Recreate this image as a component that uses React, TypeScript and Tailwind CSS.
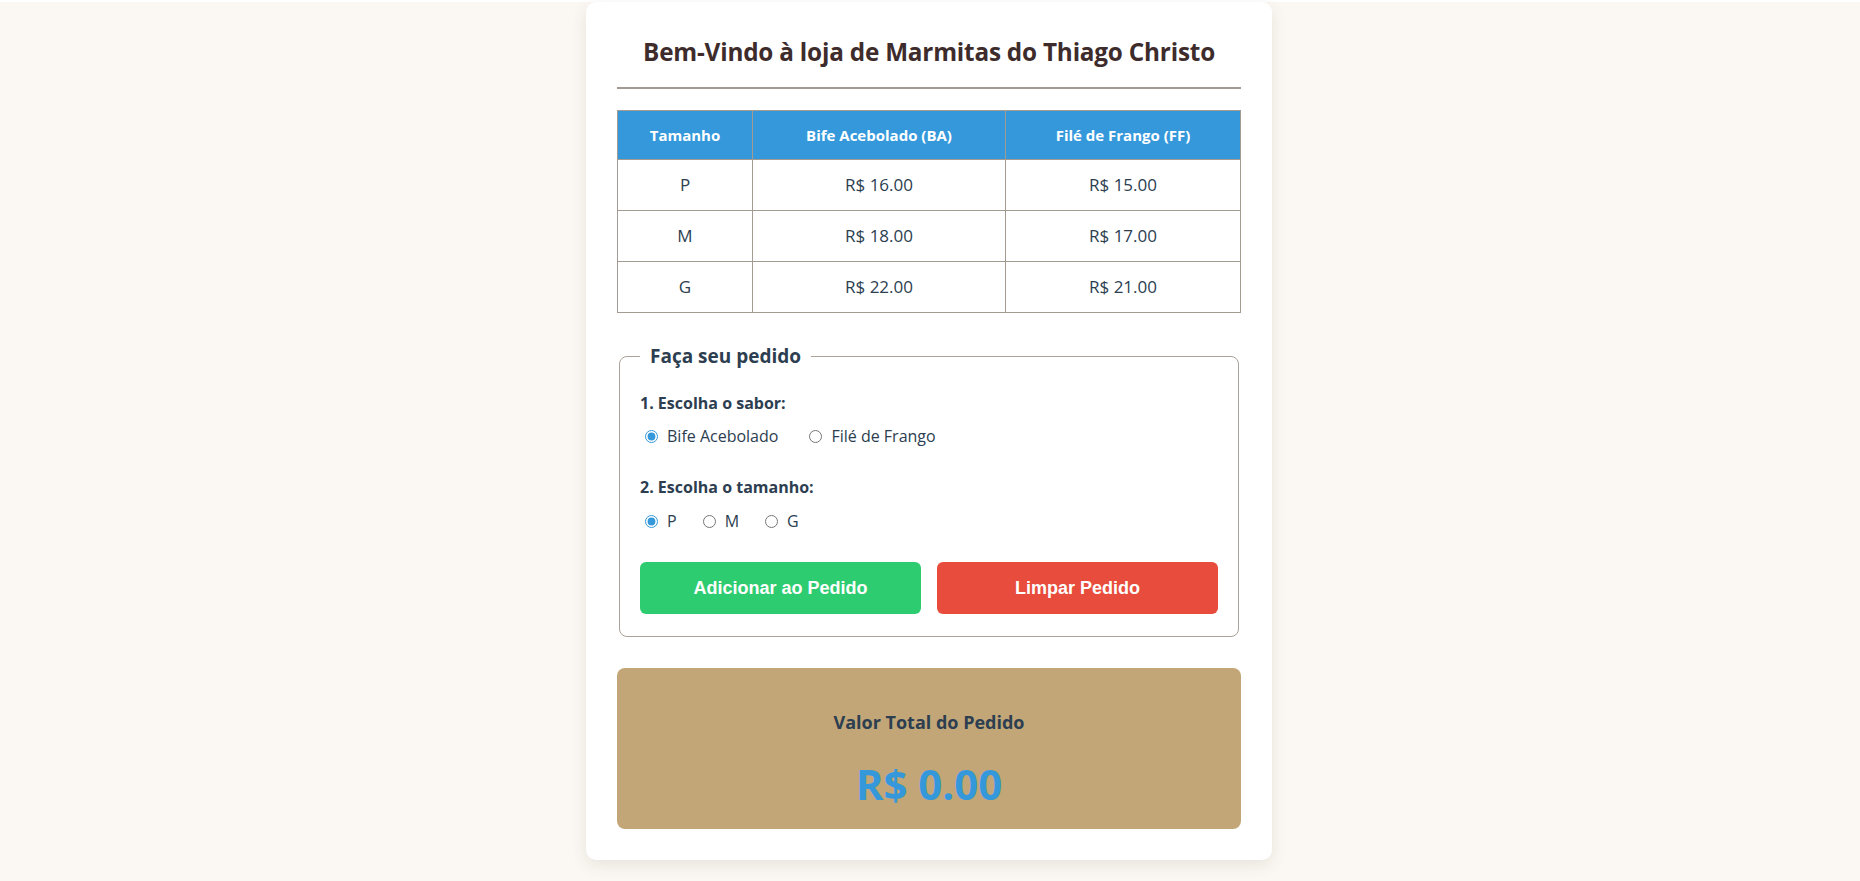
import { useState } from 'react';

const precos = [
  { tamanho: 'P', ba: 16, ff: 15 },
  { tamanho: 'M', ba: 18, ff: 17 },
  { tamanho: 'G', ba: 22, ff: 21 },
];

export default function App() {
  const [sabor, setSabor] = useState('BA');
  const [tamanho, setTamanho] = useState('P');
  const [total, setTotal] = useState(0);

  const adicionar = () => {
    const linha = precos.find((p) => p.tamanho === tamanho);
    if (!linha) return;
    setTotal((t) => t + (sabor === 'BA' ? linha.ba : linha.ff));
  };

  return (
    <div className="min-h-screen bg-[#fbf8f3] font-['Open_Sans','Noto_Sans',sans-serif] text-[#2c3e50]">
      <div className="mx-auto mt-[2px] w-[686px] -translate-x-px rounded-[10px] bg-white px-[31px] pt-[34px] pb-[31px] shadow-[0_5px_16px_rgba(60,40,20,0.10)]">
        <h1 className="border-b-2 border-[#a19a92] pb-[19px] text-center text-[24.3px] leading-8 font-bold tracking-[-0.2px] text-[#3e2c2c]">
          Bem-Vindo à loja de Marmitas do Thiago Christo
        </h1>

        {/* tabela de preços */}
        <table className="mt-[21px] w-full border-collapse text-center">
          <thead>
            <tr className="bg-[#3498db] text-white">
              <th className="border border-[#a39a91] py-3 text-[15px] leading-6 font-bold">Tamanho</th>
              <th className="border border-[#a39a91] py-3 text-[15px] leading-6 font-bold">Bife Acebolado (BA)</th>
              <th className="border border-[#a39a91] py-3 text-[15px] leading-6 font-bold">Filé de Frango (FF)</th>
            </tr>
          </thead>
          <tbody>
            {precos.map((p) => (
              <tr key={p.tamanho}>
                <td className="w-[135px] border border-[#a39a91] py-3 text-[17px] leading-[26px]">{p.tamanho}</td>
                <td className="w-[253px] border border-[#a39a91] py-3 text-[17px] leading-[26px]">R$ {p.ba.toFixed(2)}</td>
                <td className="border border-[#a39a91] py-3 text-[17px] leading-[26px]">R$ {p.ff.toFixed(2)}</td>
              </tr>
            ))}
          </tbody>
        </table>

        {/* formulário */}
        <fieldset className="mx-[2px] mt-[30px] rounded-[8px] border border-[#aba299] px-5 pt-[21px] pb-[22px]">
          <legend className="px-[10px] text-[19px] leading-[27px] font-bold">Faça seu pedido</legend>

          <div>
            <p className="text-[16px] leading-6 font-bold">1. Escolha o sabor:</p>
            <div className="mt-[9px] flex h-6 items-center text-[16px]">
              <label className="mr-[26px] flex items-center">
                <input
                  type="radio"
                  name="sabor"
                  checked={sabor === 'BA'}
                  onChange={() => setSabor('BA')}
                  className="mr-[9px] ml-[5px] h-[13px] w-[13px] accent-[#3498db]"
                />
                Bife Acebolado
              </label>
              <label className="flex items-center">
                <input
                  type="radio"
                  name="sabor"
                  checked={sabor === 'FF'}
                  onChange={() => setSabor('FF')}
                  className="mr-[9px] ml-[5px] h-[13px] w-[13px] accent-[#3498db]"
                />
                Filé de Frango
              </label>
            </div>
          </div>

          <div className="mt-[27px]">
            <p className="text-[16px] leading-6 font-bold">2. Escolha o tamanho:</p>
            <div className="mt-[10px] flex h-6 items-center text-[16px]">
              {['P', 'M', 'G'].map((t) => (
                <label key={t} className="mr-[21px] flex items-center">
                  <input
                    type="radio"
                    name="tamanho"
                    checked={tamanho === t}
                    onChange={() => setTamanho(t)}
                    className="mr-[9px] ml-[5px] h-[13px] w-[13px] accent-[#3498db]"
                  />
                  {t}
                </label>
              ))}
            </div>
          </div>

          <div className="mt-[29px] grid grid-cols-2 gap-4">
            <button
              onClick={adicionar}
              className="h-[52px] rounded-[6px] bg-[#2ecc71] font-['Liberation_Sans',Arial,sans-serif] text-[18px] font-bold text-white"
            >
              Adicionar ao Pedido
            </button>
            <button
              onClick={() => setTotal(0)}
              className="h-[52px] rounded-[6px] bg-[#e74c3c] font-['Liberation_Sans',Arial,sans-serif] text-[18px] font-bold text-white"
            >
              Limpar Pedido
            </button>
          </div>
        </fieldset>

        {/* total */}
        <div className="mt-[31px] rounded-[8px] bg-[#c2a677] pt-[41px] pb-[20px] text-center">
          <h3 className="text-[18px] leading-[27px] font-bold">Valor Total do Pedido</h3>
          <p className="mt-[23px] text-[42px] leading-[50px] font-bold text-[#3498db]">R$ {total.toFixed(2)}</p>
        </div>
      </div>
    </div>
  );
}
